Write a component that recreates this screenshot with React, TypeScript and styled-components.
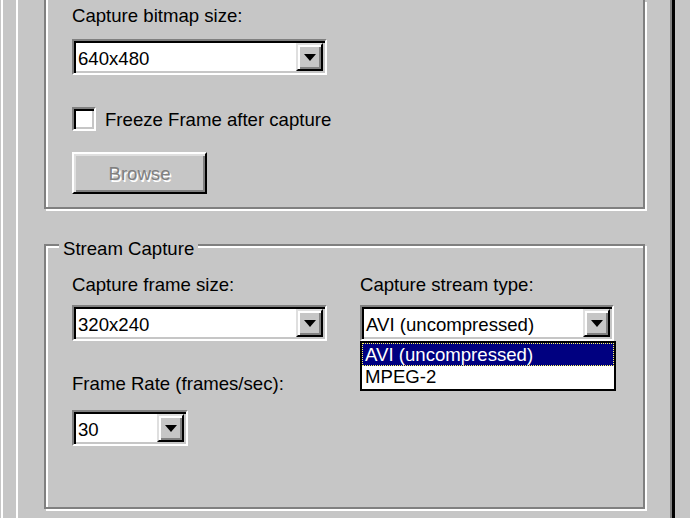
import React from 'react'
import styled, { createGlobalStyle } from 'styled-components'

const FACE = '#c6c6c6'
const SHADOW = '#808080'
const LIGHT = '#dfdfdf'

const GlobalStyle = createGlobalStyle`
  html, body {
    margin: 0;
    padding: 0;
    background: ${FACE};
  }
  body {
    font-family: "Liberation Sans", Arial, sans-serif;
    font-size: 18.6px;
    line-height: 21px;
    color: #000;
  }
`

const Frame = styled.div`
  width: 690px;
  height: 518px;
  overflow: hidden;
  box-sizing: border-box;
  padding-left: 1px;
  display: flex;
  background: ${FACE};
`

const WindowEdge = styled.div`
  border-left: 2px solid #fff;
  padding-left: 13px;
  display: flex;
`

const TabPage = styled.div`
  width: 659px;
  box-sizing: border-box;
  border-left: 2px solid #fff;
  border-right: 3px solid #000;
  box-shadow: inset -2px 0 0 ${SHADOW};
  padding: 0 27px 0 26px;
  display: flex;
  flex-direction: column;
`

const Group = styled.div<{ $cutTop?: boolean; $pad: string; $mt?: number }>`
  position: relative;
  border: 2px solid ${SHADOW};
  ${p => p.$cutTop && 'border-top: none;'}
  box-shadow: ${p => (p.$cutTop ? 'inset 2px 0 0 #fff' : 'inset 2px 2px 0 #fff')}, 2px 2px 0 #fff;
  padding: ${p => p.$pad};
  margin-top: ${p => p.$mt || 0}px;
  display: flex;
  flex-direction: column;
  align-items: flex-start;
`

const Legend = styled.span`
  position: absolute;
  top: -8px;
  left: 13px;
  padding: 0 4px;
  background: ${FACE};
`

const Label = styled.div<{ $mt?: number }>`
  margin-top: ${p => p.$mt || 0}px;
  white-space: nowrap;
`

const Sunken = styled.div`
  box-sizing: border-box;
  border: 2px solid;
  border-color: ${SHADOW} #fff #fff ${SHADOW};
  box-shadow: inset 2px 2px 0 #000, inset -2px -2px 0 ${FACE};
  background: #fff;
`

const Combo = styled(Sunken)<{ $width: number; $mt: number }>`
  position: relative;
  width: ${p => p.$width}px;
  height: 36px;
  margin-top: ${p => p.$mt}px;
  padding: 2px;
  display: flex;
`

const ComboText = styled.div`
  flex: 1;
  padding: 2px 0 0 2px;
  display: flex;
  align-items: center;
  white-space: nowrap;
  overflow: hidden;
`

const DropButton = styled.div`
  width: 27px;
  box-sizing: border-box;
  background: ${FACE};
  border: 2px solid;
  border-color: ${LIGHT} #000 #000 ${LIGHT};
  box-shadow: inset 2px 2px 0 #fff, inset -2px -2px 0 ${SHADOW};
  display: flex;
  align-items: center;
  justify-content: center;
`

const Arrow = styled.span`
  width: 0;
  height: 0;
  margin-top: 1px;
  border-left: 6px solid transparent;
  border-right: 6px solid transparent;
  border-top: 7px solid #000;
`

const DropList = styled.div`
  position: absolute;
  top: 34px;
  left: -2px;
  width: 256px;
  box-sizing: border-box;
  border: 2px solid #000;
  background: #fff;
  z-index: 2;
`

const ListItem = styled.div<{ $selected?: boolean }>`
  height: 23px;
  box-sizing: border-box;
  padding-left: 3px;
  line-height: 21px;
  white-space: nowrap;
  ${p =>
    p.$selected
      ? `background: #000080; color: #fff; border: 1px dotted #ffff60; padding-left: 2px;`
      : ''}
`

const CheckRow = styled.div<{ $mt: number }>`
  margin-top: ${p => p.$mt}px;
  display: flex;
  align-items: center;
  gap: 9px;
`

const CheckBox = styled(Sunken)`
  width: 24px;
  height: 24px;
`

const Button = styled.div<{ $mt: number }>`
  margin-top: ${p => p.$mt}px;
  width: 135px;
  height: 42px;
  box-sizing: border-box;
  border: 2px solid;
  border-color: #fff #000 #000 #fff;
  box-shadow: inset 2px 2px 0 ${LIGHT}, inset -2px -2px 0 ${SHADOW};
  display: flex;
  align-items: center;
  justify-content: center;
  color: ${SHADOW};
  text-shadow: 1.5px 1.5px 0 #fff;
`

const Columns = styled.div`
  display: grid;
  grid-template-columns: 255px 254px;
  column-gap: 33px;
`

const Column = styled.div`
  display: flex;
  flex-direction: column;
  align-items: flex-start;
`

type ComboProps = {
  value: string
  width: number
  mt: number
  options?: string[]
}

const ComboBox = ({ value, width, mt, options }: ComboProps) => (
  <Combo $width={width} $mt={mt}>
    <ComboText>{value}</ComboText>
    <DropButton>
      <Arrow />
    </DropButton>
    {options && (
      <DropList>
        {options.map(o => (
          <ListItem key={o} $selected={o === value}>
            {o}
          </ListItem>
        ))}
      </DropList>
    )}
  </Combo>
)

export default function App() {
  return (
    <Frame>
      <GlobalStyle />
      <WindowEdge>
        <TabPage>
          <Group $cutTop $pad="5px 0 13px 26px">
            <Label>Capture bitmap size:</Label>
            <ComboBox value="640x480" width={255} mt={13} />
            <CheckRow $mt={32}>
              <CheckBox />
              <span>Freeze Frame after capture</span>
            </CheckRow>
            <Button $mt={21}>Browse</Button>
          </Group>

          <Group $pad="28px 0 61px 26px" $mt={35}>
            <Legend>Stream Capture</Legend>
            <Columns>
              <Column>
                <Label>Capture frame size:</Label>
                <ComboBox value="320x240" width={255} mt={10} />
                <Label $mt={32}>Frame Rate (frames/sec):</Label>
                <ComboBox value="30" width={116} mt={16} />
              </Column>
              <Column>
                <Label>Capture stream type:</Label>
                <ComboBox
                  value="AVI (uncompressed)"
                  width={254}
                  mt={10}
                  options={['AVI (uncompressed)', 'MPEG-2']}
                />
              </Column>
            </Columns>
          </Group>
        </TabPage>
      </WindowEdge>
    </Frame>
  )
}
